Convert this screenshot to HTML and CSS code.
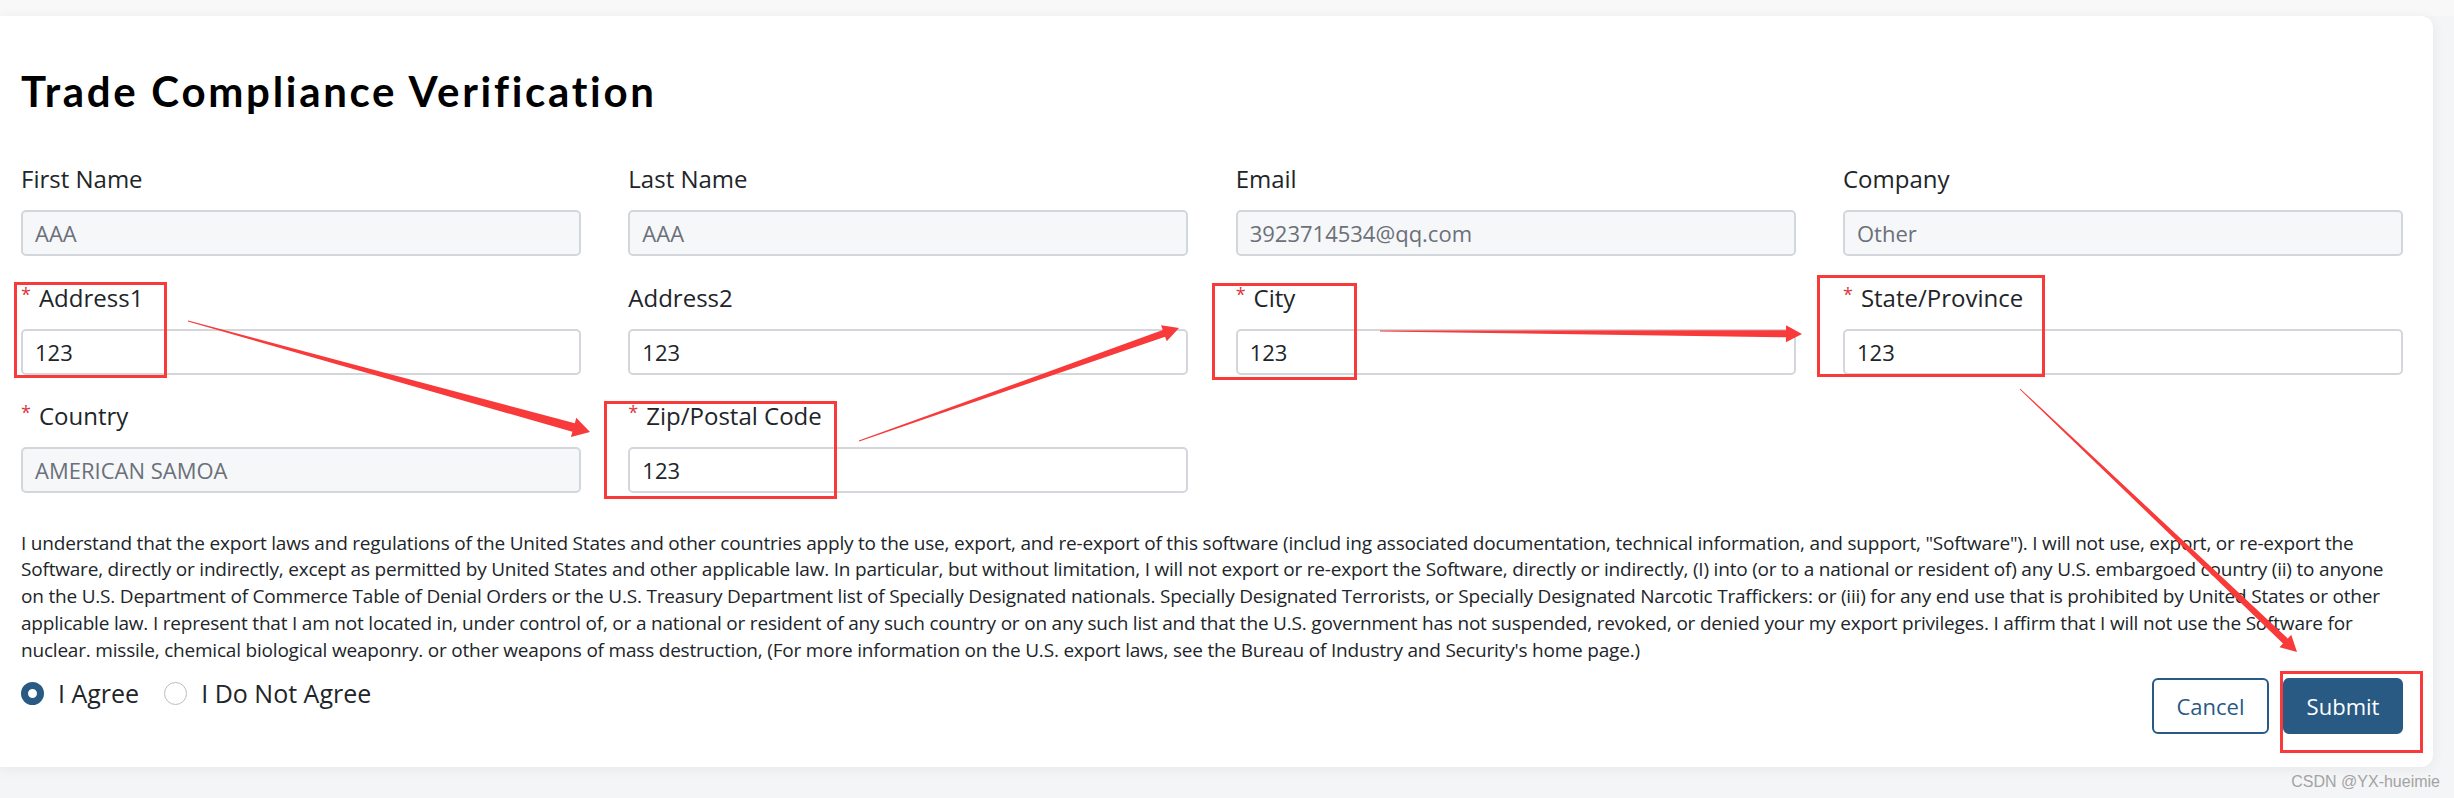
FILE: index.html
```html
<!DOCTYPE html>
<html lang="en">
<head>
<meta charset="utf-8">
<title>Trade Compliance Verification</title>
<link rel="stylesheet" href="styles.css">
</head>
<body>
<div class="page">
  <div class="topbar"></div>
  <main class="card">
    <h1 class="title">Trade Compliance Verification</h1>
    <div class="grid">
      <div class="field">
        <div class="label">First Name</div>
        <div class="input disabled">AAA</div>
      </div>
      <div class="field">
        <div class="label">Last Name</div>
        <div class="input disabled">AAA</div>
      </div>
      <div class="field">
        <div class="label">Email</div>
        <div class="input disabled">3923714534@qq.com</div>
      </div>
      <div class="field">
        <div class="label">Company</div>
        <div class="input disabled">Other</div>
      </div>
      <div class="field">
        <div class="label"><span class="req">*</span>Address1</div>
        <div class="input">123</div>
      </div>
      <div class="field">
        <div class="label">Address2</div>
        <div class="input">123</div>
      </div>
      <div class="field">
        <div class="label"><span class="req">*</span>City</div>
        <div class="input">123</div>
      </div>
      <div class="field">
        <div class="label"><span class="req">*</span>State/Province</div>
        <div class="input">123</div>
      </div>
      <div class="field">
        <div class="label"><span class="req">*</span>Country</div>
        <div class="input disabled">AMERICAN SAMOA</div>
      </div>
      <div class="field">
        <div class="label"><span class="req">*</span>Zip/Postal Code</div>
        <div class="input">123</div>
      </div>
    </div>
    <p class="terms">I understand that the export laws and regulations of the United States and other countries apply to the use, export, and re-export of this software (includ ing associated documentation, technical information, and support, "Software"). I will not use, export, or re-export the Software, directly or indirectly, except as permitted by United States and other applicable law. In particular, but without limitation, I will not export or re-export the Software, directly or indirectly, (I) into (or to a national or resident of) any U.S. embargoed country (ii) to anyone on the U.S. Department of Commerce Table of Denial Orders or the U.S. Treasury Department list of Specially Designated nationals. Specially Designated Terrorists, or Specially Designated Narcotic Traffickers: or (iii) for any end use that is prohibited by United States or other applicable law. I represent that I am not located in, under control of, or a national or resident of any such country or on any such list and that the U.S. government has not suspended, revoked, or denied your my export privileges. I affirm that I will not use the Software for nuclear. missile, chemical biological weaponry. or other weapons of mass destruction, (For more information on the U.S. export laws, see the Bureau of Industry and Security's home page.)</p>
    <div class="actions">
      <div class="radios">
        <div class="radio"><span class="dot checked"></span><span class="radio-text">I Agree</span></div>
        <div class="radio"><span class="dot"></span><span class="radio-text">I Do Not Agree</span></div>
      </div>
      <div class="buttons">
        <div class="btn btn-outline">Cancel</div>
        <div class="btn btn-primary">Submit</div>
      </div>
    </div>
  </main>

  <svg class="annotations" width="2454" height="798" viewBox="0 0 2454 798">
    <g fill="none" stroke="#f83a3a" stroke-width="3">
      <rect x="15.5" y="283.5" width="150" height="93"/>
      <rect x="605.5" y="402.5" width="230" height="95"/>
      <rect x="1213.5" y="284.5" width="142" height="94"/>
      <rect x="1818.5" y="276.5" width="225" height="99"/>
      <rect x="2281.5" y="672.5" width="140" height="79"/>
    </g>
    <g fill="#f83a3a">
      <polygon points="187.87,321.48 572.41,431.81 570.95,437.11 590,432 576.27,417.83 574.81,423.13 188.13,320.52"/>
      <polygon points="859.17,441.47 1165.08,336.63 1166.74,341.34 1179,328 1161.08,325.32 1162.74,330.03 858.83,440.53"/>
      <polygon points="1380,331.5 1785.97,337.35 1785.92,342.35 1802,334 1786.08,325.35 1786.03,330.35 1380,330.5"/>
      <polygon points="2019.66,389.36 2282.99,643.52 2279.55,647.14 2297,652 2291.25,634.82 2287.81,638.44 2020.34,388.64"/>
    </g>
  </svg>

  <div class="watermark">CSDN @YX-hueimie</div>
</div>
</body>
</html>
```
FILE: styles.css
```css
* {
  box-sizing: border-box;
}

html, body {
  margin: 0;
  padding: 0;
}

body {
  background: #f4f5f7;
  font-family: "Open Sans", "Noto Sans", sans-serif;
  color: #212529;
}

.page {
  position: relative;
  width: 2454px;
  height: 798px;
  overflow: hidden;
}

.topbar {
  height: 16px;
  background: #f8f8f8;
}

.card {
  width: 2433px;
  height: 751px;
  background: #ffffff;
  border-radius: 0 12px 12px 0;
  box-shadow: 0 2px 14px rgba(0, 0, 0, 0.06);
  padding: 50px 30px 32px 21px;
}

.title {
  margin: 0;
  font-family: "Lato", "Open Sans", sans-serif;
  font-weight: 700;
  font-size: 42px;
  line-height: 50px;
  letter-spacing: 2.7px;
  color: #000000;
}

.grid {
  margin-top: 47px;
  display: grid;
  grid-template-columns: repeat(4, 1fr);
  column-gap: 47.33px;
  row-gap: 25.5px;
}

.field {
  display: flex;
  flex-direction: column;
}

.label {
  font-size: 24px;
  line-height: 32px;
  height: 32px;
  color: #212529;
  white-space: nowrap;
}

.req {
  color: #d9383c;
  font-size: 18px;
  display: inline-block;
  vertical-align: top;
  line-height: 24px;
  margin-right: 8px;
}

.input {
  margin-top: 15px;
  height: 46px;
  border: 2px solid #d3d7dc;
  border-radius: 5px;
  background: #ffffff;
  font-size: 22px;
  line-height: 42px;
  padding: 0 12px;
  color: #212529;
}

.input.disabled {
  background: #f6f7f9;
  color: #6b7079;
}

.terms {
  margin: 36.7px 0 0 0;
  font-size: 19px;
  line-height: 26.75px;
  letter-spacing: -0.2px;
  color: #212529;
}

.actions {
  margin-top: 14px;
  display: flex;
  justify-content: space-between;
  align-items: flex-start;
}

.radios {
  display: flex;
  align-items: center;
  gap: 25px;
  height: 32px;
}

.radio {
  display: flex;
  align-items: center;
  gap: 14px;
}

.dot {
  width: 23px;
  height: 23px;
  border-radius: 50%;
  border: 1px solid #b9bcc2;
  background: #ffffff;
  display: inline-block;
}

.dot.checked {
  border: 7px solid #285a84;
  background: #ffffff;
}

.radio-text {
  font-size: 25px;
  line-height: 32px;
  color: #212529;
}

.buttons {
  display: flex;
  gap: 14px;
  margin-top: 1px;
}

.btn {
  height: 56px;
  border-radius: 6px;
  font-size: 22px;
  line-height: 52px;
  border: 2px solid #285a84;
  text-align: center;
}

.btn-outline {
  width: 117px;
  background: #ffffff;
  color: #285a84;
}

.btn-primary {
  width: 120px;
  background: #285a84;
  color: #ffffff;
}

.annotations {
  position: absolute;
  left: 0;
  top: 0;
  pointer-events: none;
}

.watermark {
  position: absolute;
  right: 14px;
  bottom: 7px;
  font-family: "Liberation Sans", Arial, sans-serif;
  font-size: 16px;
  color: #a3a3a3;
}
```
